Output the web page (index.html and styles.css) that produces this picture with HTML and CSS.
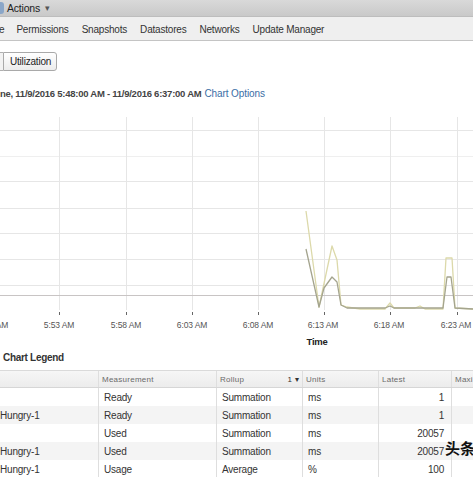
FILE: index.html
```html
<!DOCTYPE html>
<html>
<head>
<meta charset="utf-8">
<link rel="stylesheet" href="styles.css">
</head>
<body>
<div class="page">
  <div class="topbar">
    <span class="topicon"></span>
    <span class="actions">Actions</span>
    <span class="caret">▾</span>
  </div>
  <div class="tabs">
    <span class="tab first">e</span>
    <span class="tab">Permissions</span>
    <span class="tab">Snapshots</span>
    <span class="tab">Datastores</span>
    <span class="tab">Networks</span>
    <span class="tab">Update Manager</span>
  </div>
  <div class="toolbar">
    <span class="btn-stub"></span>
    <span class="btn">Utilization</span>
  </div>
  <div class="title">
    <span class="range">ne, 11/9/2016 5:48:00 AM - 11/9/2016 6:37:00 AM</span>
    <span class="link">Chart Options</span>
  </div>
  <div class="chart">
    <svg width="473" height="250" viewBox="0 0 473 250" xmlns="http://www.w3.org/2000/svg">
      <g stroke="#e6e6e6" stroke-width="1">
        <line x1="0" y1="29.5" x2="473" y2="29.5"/>
        <line x1="0" y1="55.5" x2="473" y2="55.5" stroke="#efefef"/>
        <line x1="0" y1="80.5" x2="473" y2="80.5"/>
        <line x1="0" y1="107.5" x2="473" y2="107.5"/>
        <line x1="0" y1="132.5" x2="473" y2="132.5"/>
        <line x1="0" y1="158.5" x2="473" y2="158.5"/>
        <line x1="0" y1="184.5" x2="473" y2="184.5"/>
        <line x1="59.5" y1="16" x2="59.5" y2="209"/>
        <line x1="126.5" y1="16" x2="126.5" y2="209"/>
        <line x1="192.5" y1="16" x2="192.5" y2="209"/>
        <line x1="258.5" y1="16" x2="258.5" y2="209"/>
        <line x1="324.5" y1="16" x2="324.5" y2="209"/>
        <line x1="390.5" y1="16" x2="390.5" y2="209"/>
        <line x1="457.5" y1="16" x2="457.5" y2="209"/>
      </g>
      <line x1="0" y1="194.5" x2="473" y2="194.5" stroke="#c8c4c4" stroke-width="1"/>
      <g stroke="#666" stroke-width="1">
        <line x1="59.5" y1="211" x2="59.5" y2="214"/>
        <line x1="126.5" y1="211" x2="126.5" y2="214"/>
        <line x1="192.5" y1="211" x2="192.5" y2="214"/>
        <line x1="258.5" y1="211" x2="258.5" y2="214"/>
        <line x1="324.5" y1="211" x2="324.5" y2="214"/>
        <line x1="390.5" y1="211" x2="390.5" y2="214"/>
        <line x1="457.5" y1="211" x2="457.5" y2="214"/>
      </g>
      <polyline fill="none" stroke="#dcd9aa" stroke-width="1.3" stroke-linejoin="round"
        points="306,110 319,206 332,145 337,159 341,204 347,206 360,208 385,208 390,202 394,207 415,207 420,205 425,208 443,208 446,157 452,157 455,207 473,208"/>
      <polyline fill="none" stroke="#a4a48e" stroke-width="1.3" stroke-linejoin="round"
        points="306,148 319,206 324,187 332,176 337,181 341,204 347,207 385,207 390,205 394,207 443,207 447,176 451,176 455,207 473,208"/>
      <g class="axis" text-anchor="middle">
        <text x="-7" y="227">5:48 AM</text>
        <text x="59" y="227">5:53 AM</text>
        <text x="126" y="227">5:58 AM</text>
        <text x="192" y="227">6:03 AM</text>
        <text x="258" y="227">6:08 AM</text>
        <text x="323" y="227">6:13 AM</text>
        <text x="389" y="227">6:18 AM</text>
        <text x="456" y="227">6:23 AM</text>
      </g>
      <text class="axis-title" x="317" y="244" text-anchor="middle">Time</text>
    </svg>
  </div>
  <div class="legend-title">Chart Legend</div>
  <div class="legend">
    <div class="row head">
      <div class="cell"></div>
      <div class="cell">Measurement</div>
      <div class="cell sort">Rollup <span class="sortmark">1 ▾</span></div>
      <div class="cell">Units</div>
      <div class="cell">Latest</div>
      <div class="cell">Maxi</div>
    </div>
    <div class="row">
      <div class="cell"></div>
      <div class="cell">Ready</div>
      <div class="cell">Summation</div>
      <div class="cell">ms</div>
      <div class="cell num">1</div>
      <div class="cell"></div>
    </div>
    <div class="row alt">
      <div class="cell name">Hungry-1</div>
      <div class="cell">Ready</div>
      <div class="cell">Summation</div>
      <div class="cell">ms</div>
      <div class="cell num">1</div>
      <div class="cell"></div>
    </div>
    <div class="row">
      <div class="cell"></div>
      <div class="cell">Used</div>
      <div class="cell">Summation</div>
      <div class="cell">ms</div>
      <div class="cell num">20057</div>
      <div class="cell"></div>
    </div>
    <div class="row alt">
      <div class="cell name">Hungry-1</div>
      <div class="cell">Used</div>
      <div class="cell">Summation</div>
      <div class="cell">ms</div>
      <div class="cell num">20057</div>
      <div class="cell"></div>
    </div>
    <div class="row">
      <div class="cell name">Hungry-1</div>
      <div class="cell">Usage</div>
      <div class="cell">Average</div>
      <div class="cell">%</div>
      <div class="cell num">100</div>
      <div class="cell"></div>
    </div>
  </div>
  <div class="watermark">头条</div>
</div>
</body>
</html>
```

FILE: styles.css
```css
html, body {
  margin: 0;
  padding: 0;
  background: #ffffff;
  overflow: hidden;
}
.page {
  position: relative;
  width: 473px;
  height: 477px;
  overflow: hidden;
  font-family: "Liberation Sans", Arial, sans-serif;
  color: #333;
}
.topbar {
  height: 17px;
  display: flex;
  align-items: center;
  background: linear-gradient(#d9d9d9, #c9c9c9);
  border-bottom: 1px solid #bdbdbd;
  box-sizing: border-box;
}
.topicon {
  width: 4px;
  height: 12px;
  background: #8aa6c8;
  border-radius: 0 3px 3px 0;
  margin-right: 3px;
}
.actions {
  font-size: 10.5px;
  letter-spacing: -0.2px;
  color: #222;
}
.caret {
  font-size: 9px;
  color: #555;
  margin-left: 5px;
}
.tabs {
  height: 24px;
  box-sizing: border-box;
  padding-top: 2px;
  display: flex;
  align-items: center;
  gap: 13px;
  background: #efefef;
  border-bottom: 1px solid #c4c4c4;
}
.tab {
  font-size: 10px;
  letter-spacing: -0.2px;
  color: #333;
}
.tab.first {
  margin-left: -1px;
  margin-right: -1px;
}
.toolbar {
  display: flex;
  padding-top: 11px;
  height: 19px;
}
.btn-stub {
  width: 3px;
  height: 19px;
  box-sizing: border-box;
  background: #f2f2f2;
  border-top: 1px solid #b0b0b0;
  border-bottom: 1px solid #b0b0b0;
}
.btn {
  height: 19px;
  box-sizing: border-box;
  padding: 0 5px 0 6px;
  display: flex;
  align-items: center;
  border: 1px solid #a9a9a9;
  border-radius: 0 3px 3px 0;
  background: linear-gradient(#ffffff, #ececec);
  font-size: 10px;
  letter-spacing: -0.2px;
  color: #222;
}
.title {
  margin-top: 16px;
  height: 14px;
  line-height: 14px;
  display: flex;
  gap: 3px;
  white-space: nowrap;
}
.range {
  font-size: 9.5px;
  font-weight: bold;
  letter-spacing: -0.25px;
  color: #444;
}
.link {
  font-size: 10px;
  letter-spacing: -0.1px;
  color: #3a6ea5;
}
.chart {
  height: 250px;
}
.chart svg {
  display: block;
}
.axis text {
  font-family: "Liberation Sans", Arial, sans-serif;
  font-size: 8.5px;
  letter-spacing: -0.1px;
  fill: #555;
}
.axis-title {
  font-family: "Liberation Sans", Arial, sans-serif;
  font-size: 9.5px;
  font-weight: bold;
  letter-spacing: -0.3px;
  fill: #222;
}
.legend-title {
  height: 14px;
  line-height: 14px;
  padding-left: 3px;
  font-size: 10px;
  font-weight: bold;
  letter-spacing: -0.3px;
  color: #333;
  margin-bottom: 5px;
}
.legend {
  display: flex;
  flex-direction: column;
}
.row {
  display: grid;
  grid-template-columns: 98px 118px 86px 76px 73px 1fr;
  height: 18px;
}
.row.alt {
  background: #f4f4f4;
}
.row.head {
  background: linear-gradient(#f6f6f6, #ececec);
  border-top: 1px solid #dadada;
  border-bottom: 1px solid #d6d6d6;
  height: 18px;
  box-sizing: border-box;
}
.cell {
  display: flex;
  align-items: center;
  padding-left: 5px;
  font-size: 10px;
  letter-spacing: -0.2px;
  color: #333;
  white-space: nowrap;
  border-left: 1px solid #dedede;
  overflow: hidden;
}
.cell:first-child {
  border-left: none;
}
.cell.name {
  padding-left: 0;
}
.head .cell {
  font-size: 8px;
  letter-spacing: 0.25px;
  color: #6a6a6a;
  padding-left: 3px;
}
.head .cell.sort {
  justify-content: space-between;
  padding-right: 3px;
}
.sortmark {
  color: #333;
  font-size: 8px;
}
.cell.num {
  justify-content: flex-end;
  padding-left: 0;
  padding-right: 7px;
}
.watermark {
  position: absolute;
  left: 445px;
  top: 438px;
  font-family: "Noto Sans CJK SC", sans-serif;
  font-size: 15px;
  font-weight: bold;
  line-height: 20px;
  color: #111;
  white-space: nowrap;
}
```
